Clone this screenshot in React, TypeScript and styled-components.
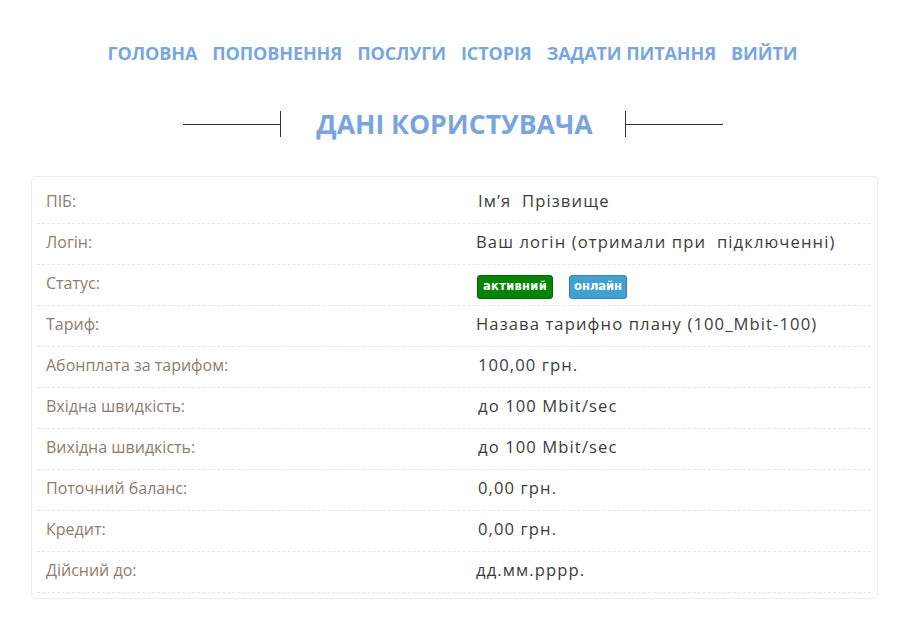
import React from "react";
import styled, { createGlobalStyle } from "styled-components";

const Global = createGlobalStyle`
  html, body { margin: 0; padding: 0; background: #fff; }
  body { font-family: "Open Sans", "Liberation Sans", sans-serif; }
`;

const Page = styled.div`
  width: 912px;
  padding-top: 40px;
  box-sizing: border-box;
`;

const Nav = styled.nav`
  display: flex;
  justify-content: center;
  gap: 15px;
  padding-right: 7px;
`;

const NavLink = styled.a`
  font-size: 18px;
  font-weight: 700;
  color: #7aa6e0;
  text-decoration: none;
  line-height: 26px;
  letter-spacing: -0.1px;
`;

const TitleRow = styled.div`
  display: flex;
  justify-content: center;
  align-items: center;
  margin-top: 43px;
  padding-right: 6px;
`;

const Rule = styled.div<{ $side: "left" | "right" }>`
  width: 98px;
  height: 26px;
  position: relative;
  &::before {
    content: "";
    position: absolute;
    left: 0;
    right: 0;
    top: 13px;
    border-top: 1px solid #333;
  }
  &::after {
    content: "";
    position: absolute;
    top: 0;
    bottom: 0;
    ${(p) => (p.$side === "left" ? "right: 0;" : "left: 0;")}
    border-left: 1px solid #333;
  }
`;

const Title = styled.h1`
  margin: 0;
  width: 344px;
  text-align: center;
  text-indent: 3px;
  font-size: 26.6px;
  font-weight: 700;
  color: #78a4df;
  line-height: 30px;
`;

const Card = styled.div`
  margin: 37px 34px 0 31px;
  border: 1px solid #ececec;
  border-radius: 5px;
  padding: 6px 6px 5px 5px;
`;

const Row = styled.div`
  display: grid;
  grid-template-columns: 431px 1fr;
  align-items: center;
  height: 40px;
  border-bottom: 1px dashed #e6e6e6;
`;

const Label = styled.div`
  padding-left: 9px;
  font-size: 16px;
  color: #8a7e70;
  line-height: 22px;
  margin-top: -5px;
`;

const Value = styled.div<{ $shift?: number }>`
  padding-left: ${(p) => 8 + (p.$shift ?? 0)}px;
  font-size: 16.6px;
  color: #3c3c3c;
  letter-spacing: 1.1px;
  line-height: 22px;
  margin-top: -5px;
  white-space: pre;
`;

const Badges = styled.div`
  padding-left: 9px;
  display: flex;
  gap: 16px;
  align-items: center;
  margin-top: 3px;
`;

const Badge = styled.span<{ $tone: "green" | "blue" }>`
  display: inline-block;
  font-family: "DejaVu Sans", "Liberation Sans", sans-serif;
  font-size: 11.5px;
  font-weight: 700;
  color: #fff;
  letter-spacing: ${(p) => (p.$tone === "green" ? "0.3px" : "0px")};
  line-height: 15px;
  padding: 3.5px ${(p) => (p.$tone === "green" ? "5px" : "4px")};
  border-radius: 3px;
  background: ${(p) => (p.$tone === "green" ? "#068406" : "#41a1d0")};
  border: 1px solid ${(p) => (p.$tone === "green" ? "#046804" : "#3584ad")};
`;

const rows: { label: string; value?: string; shift?: number; badges?: boolean }[] = [
  { label: "ПІБ:", value: "Ім’я  Прізвище", shift: 2 },
  { label: "Логін:", value: "Ваш логін (отримали при  підключенні)" },
  { label: "Статус:", badges: true },
  { label: "Тариф:", value: "Назава тарифно плану (100_Mbit-100)" },
  { label: "Абонплата за тарифом:", value: "100,00 грн.", shift: 2 },
  { label: "Вхідна швидкість:", value: "до 100 Mbit/sec", shift: 2 },
  { label: "Вихідна швидкість:", value: "до 100 Mbit/sec", shift: 2 },
  { label: "Поточний баланс:", value: "0,00 грн.", shift: 2 },
  { label: "Кредит:", value: "0,00 грн.", shift: 2 },
  { label: "Дійсний до:", value: "дд.мм.рррр." },
];

export default function App() {
  return (
    <Page>
      <Global />
      <Nav>
        {["ГОЛОВНА", "ПОПОВНЕННЯ", "ПОСЛУГИ", "ІСТОРІЯ", "ЗАДАТИ ПИТАННЯ", "ВИЙТИ"].map((t) => (
          <NavLink key={t} href="#">
            {t}
          </NavLink>
        ))}
      </Nav>
      <TitleRow>
        <Rule $side="left" />
        <Title>ДАНІ КОРИСТУВАЧА</Title>
        <Rule $side="right" />
      </TitleRow>
      <Card>
        {rows.map((r) => (
          <Row key={r.label}>
            <Label>{r.label}</Label>
            {r.badges ? (
              <Badges>
                <Badge $tone="green">активний</Badge>
                <Badge $tone="blue">онлайн</Badge>
              </Badges>
            ) : (
              <Value $shift={r.shift}>{r.value}</Value>
            )}
          </Row>
        ))}
      </Card>
    </Page>
  );
}
